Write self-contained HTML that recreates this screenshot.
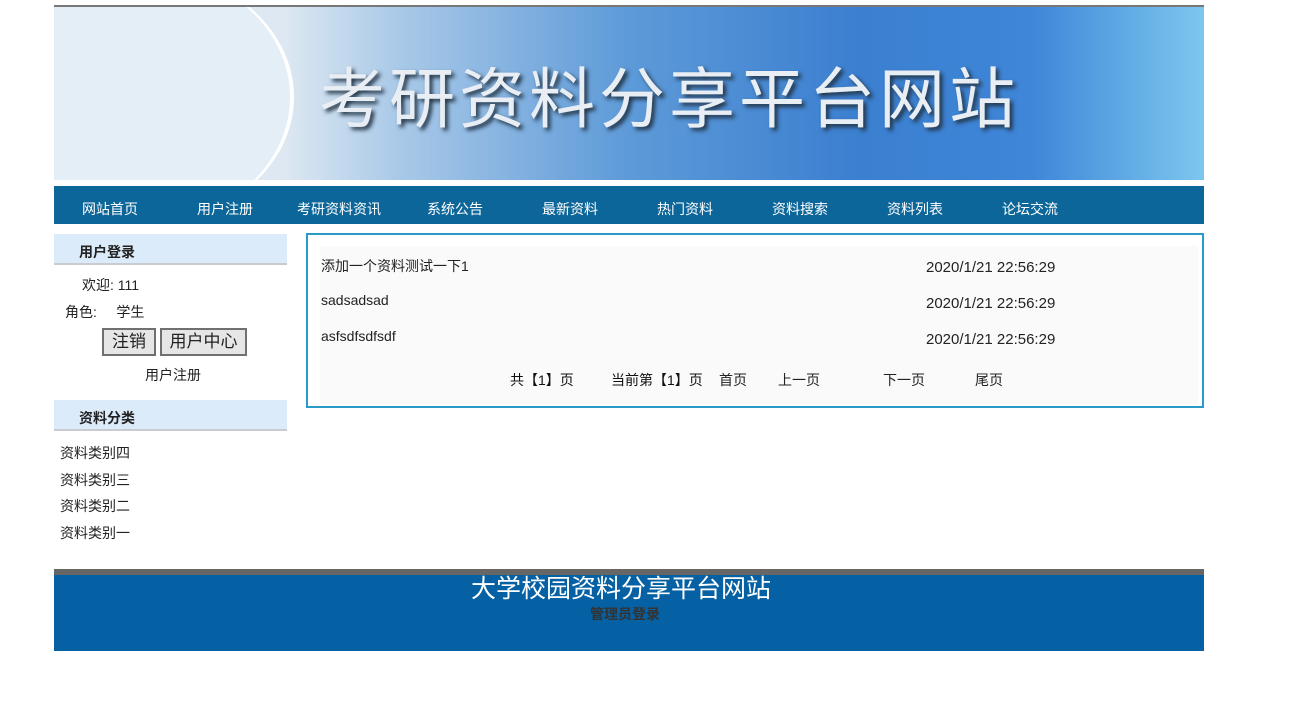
<!DOCTYPE html>
<html><head><meta charset="utf-8"><style>
*{margin:0;padding:0;box-sizing:border-box}
body{width:1297px;height:705px;background:#fff;font-family:"Liberation Sans","Noto Sans CJK SC",sans-serif;font-size:14px;color:#222;position:relative;overflow:hidden}
.abs{position:absolute}
#ban{left:54px;top:5px;width:1150px;height:175px;border-top:2px solid #777;background:linear-gradient(90deg,#e8eef4 0%,#dde8f2 20%,#a9c9e8 30%,#5d9ad8 50%,#3b7fd0 70%,#3f86d8 85%,#7cc7ef 100%);overflow:hidden}
#ban .ell{position:absolute;left:-80px;top:-40px;width:320px;height:260px;border-radius:50%;background:#e4eef7;border-right:4px solid #fff}
#ban .t{position:absolute;left:265px;top:45px;font-size:66px;color:#e8eef4;letter-spacing:4px;text-shadow:3px 3px 4px #234;font-family:"Noto Sans CJK SC",sans-serif;line-height:84px;white-space:nowrap}
#nav{left:54px;top:186px;width:1150px;height:38px;background:#0d6699}
#nav span{position:absolute;top:13px;color:#fff;font-size:14px}
.hd{left:54px;width:233px;height:31px;background:#dcebfa;border-bottom:2px solid #c8ccd0;font-weight:bold;font-size:14px;padding:8px 0 0 25px}
.btn{position:absolute;top:328px;height:28px;background:#e6e6e6;border:2px solid #707070;font-size:17px;text-align:center;line-height:24px}
#box{left:306px;top:233px;width:898px;height:175px;border:2px solid #2a9ac8}
#inner{position:absolute;left:12px;top:11px;width:878px;height:158px;background:#fafafa}
#foot{left:54px;top:569px;width:1150px;height:82px;background:#0561a3;border-top:6px solid #666}
.d{font-size:15px}
</style></head><body>
<div id="ban" class="abs"><div class="ell"></div><div class="t">考研资料分享平台网站</div></div>
<div id="nav" class="abs">
<span style="left:28px">网站首页</span><span style="left:143px">用户注册</span><span style="left:243px">考研资料资讯</span><span style="left:373px">系统公告</span><span style="left:488px">最新资料</span><span style="left:603px">热门资料</span><span style="left:718px">资料搜索</span><span style="left:833px">资料列表</span><span style="left:948px">论坛交流</span>
</div>
<div class="abs hd" style="top:234px">用户登录</div>
<div class="abs" style="left:82px;top:275px">欢迎: 111</div>
<div class="abs" style="left:65px;top:302px">角色:&nbsp;&nbsp;&nbsp;&nbsp;&nbsp;学生</div>
<div class="btn" style="left:102px;width:54px">注销</div>
<div class="btn" style="left:160px;width:87px">用户中心</div>
<div class="abs" style="left:145px;top:365px">用户注册</div>
<div class="abs hd" style="top:400px">资料分类</div>
<div class="abs" style="left:60px;top:443px">资料类别四</div>
<div class="abs" style="left:60px;top:470px">资料类别三</div>
<div class="abs" style="left:60px;top:496px">资料类别二</div>
<div class="abs" style="left:60px;top:523px">资料类别一</div>
<div id="box" class="abs"><div id="inner"></div></div>
<div class="abs" style="left:321px;top:256px">添加一个资料测试一下1</div>
<div class="abs" style="left:321px;top:292px">sadsadsad</div>
<div class="abs" style="left:321px;top:328px">asfsdfsdfsdf</div>
<div class="abs d" style="left:926px;top:259px">2020/1/21 22:56:29</div>
<div class="abs d" style="left:926px;top:295px">2020/1/21 22:56:29</div>
<div class="abs d" style="left:926px;top:331px">2020/1/21 22:56:29</div>
<div class="abs" style="left:510px;top:370px;color:#111">共【1】页</div>
<div class="abs" style="left:611px;top:370px;color:#111">当前第【1】页</div>
<div class="abs" style="left:719px;top:370px">首页</div>
<div class="abs" style="left:778px;top:370px">上一页</div>
<div class="abs" style="left:883px;top:370px">下一页</div>
<div class="abs" style="left:975px;top:370px">尾页</div>
<div id="foot" class="abs"></div>
<div class="abs" style="left:471px;top:573px;font-size:25px;color:#fff;line-height:32px">大学校园资料分享平台网站</div>
<div class="abs" style="left:590px;top:604px;font-size:14px;font-weight:bold;color:#333">管理员登录</div>
</body></html>
